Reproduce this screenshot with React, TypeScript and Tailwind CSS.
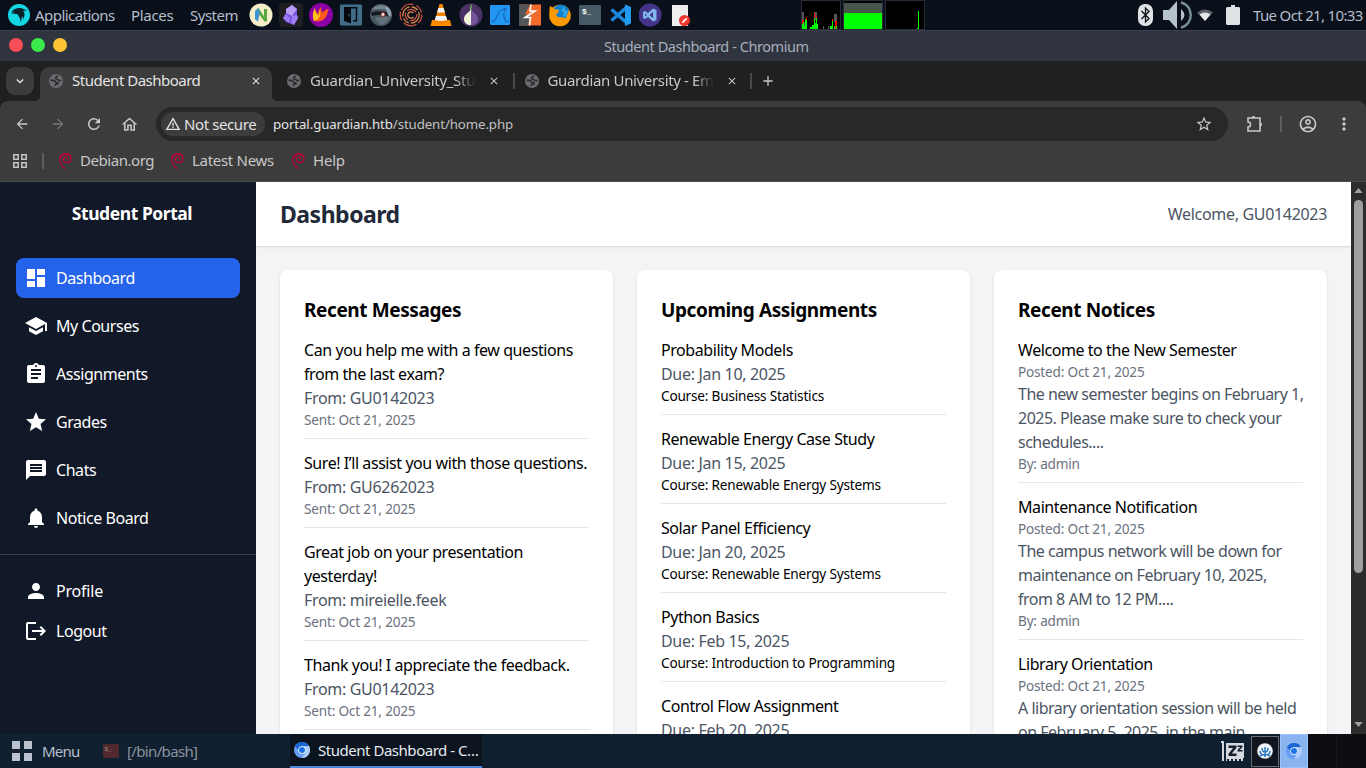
import React from "react";
import {
  MdDashboard, MdSchool, MdAssignment, MdGrade, MdMessage, MdNotifications, MdPerson, MdLogout,
  MdArrowBack, MdArrowForward, MdRefresh, MdOutlineHome, MdStarBorder,
  MdOutlineAccountCircle, MdMoreVert, MdAdd, MdClose, MdWarningAmber,
} from "react-icons/md";

type Entry = { title: string[]; rows: { text: string; cls: string }[] };

const from = "text-[#4b5563] tracking-[-0.32px]";
const small = "text-[13.6px] leading-5 text-[#6b7280]";
const course = "text-[13.6px] leading-5 text-black";
const body = "text-[#4b5563] tracking-[-0.5px]";

const message = (title: string[], sender: string): Entry => ({
  title,
  rows: [{ text: `From: ${sender}`, cls: from }, { text: "Sent: Oct 21, 2025", cls: small }],
});
const assignment = (title: string, due: string, name: string): Entry => ({
  title: [title],
  rows: [{ text: `Due: ${due}`, cls: from }, { text: `Course: ${name}`, cls: course }],
});
const notice = (title: string, lines: string[]): Entry => ({
  title: [title],
  rows: [
    { text: "Posted: Oct 21, 2025", cls: small },
    ...lines.map((text) => ({ text, cls: body })),
    { text: "By: admin", cls: small },
  ],
});

const columns: { heading: string; entries: Entry[] }[] = [
  {
    heading: "Recent Messages",
    entries: [
      message(["Can you help me with a few questions", "from the last exam?"], "GU0142023"),
      message(["Sure! I’ll assist you with those questions."], "GU6262023"),
      message(["Great job on your presentation", "yesterday!"], "mireielle.feek"),
      message(["Thank you! I appreciate the feedback."], "GU0142023"),
    ],
  },
  {
    heading: "Upcoming Assignments",
    entries: [
      assignment("Probability Models", "Jan 10, 2025", "Business Statistics"),
      assignment("Renewable Energy Case Study", "Jan 15, 2025", "Renewable Energy Systems"),
      assignment("Solar Panel Efficiency", "Jan 20, 2025", "Renewable Energy Systems"),
      assignment("Python Basics", "Feb 15, 2025", "Introduction to Programming"),
      assignment("Control Flow Assignment", "Feb 20, 2025", "Introduction to Programming"),
    ],
  },
  {
    heading: "Recent Notices",
    entries: [
      notice("Welcome to the New Semester", ["The new semester begins on February 1,", "2025. Please make sure to check your", "schedules...."]),
      notice("Maintenance Notification", ["The campus network will be down for", "maintenance on February 10, 2025,", "from 8 AM to 12 PM...."]),
      notice("Library Orientation", ["A library orientation session will be held", "on February 5, 2025, in the main"]),
    ],
  },
];

const Svg = ({ children, className = "size-6" }: { children: React.ReactNode; className?: string }) => (
  <svg viewBox="0 0 24 24" className={`${className} shrink-0`}>{children}</svg>
);

function Launchers() {
  return (
    <div className="flex items-center gap-[6px]">
      <Svg>
        <circle cx="12" cy="12" r="11.5" fill="#f4efc8" />
        <path d="M6 8l3-2.500v13L6 16z" fill="#3e93d3" />
        <path d="M8.500 5.500h1.500l5 8V6h3v12.500h-2.500L9 10z" fill="#5aa845" />
        <path d="M6 8l3-2.500 2 3-2 10L6 16z" fill="#3e93d3" />
      </Svg>
      <Svg>
        <rect width="24" height="24" rx="4" fill="#1f1e20" />
        <path d="M13 2l5 4 0 6 1 3-4 7-8-3-3-4 3-5 0-4z" fill="#7c4fe0" />
        <path d="M13 2l5 4-5 7-6-3V6z" fill="#b79cf5" />
        <path d="M7 11l4 4-1 5-6-5zM13 13l5-1 1 3-4 7-3-2z" fill="#9c7af0" />
      </Svg>
      <Svg>
        <circle cx="12" cy="12" r="12" fill="#8c00a5" />
        <path d="M5 18c-2-5-1-9 1-13 0 3 2 5 3 6 0-3 1-5 3-7 0 3 1 4 1 6 2-2 4-4 7-4-2 3-1 6-4 9-2 3-7 4-11 3z" fill="#ff5a1c" />
        <path d="M5 18C3 13 4 9 6 5c0 4 2 6 4 8 0-3 0-5 1-6 1 5 0 9-6 11z" fill="#ffc21a" />
      </Svg>
      <Svg>
        <rect x=".5" y="1" width="23" height="22" rx="2" fill="#426d88" stroke="#0b1720" />
        <path d="M5 4h7v16.500L5 18z" fill="#05090d" />
        <path d="M12 4.800h5.500v13H14" fill="none" stroke="#05090d" strokeWidth="1.500" />
        <path d="M10 10.500v3" stroke="#426d88" />
      </Svg>
      <Svg>
        <circle cx="12" cy="12" r="11" fill="#4a5963" />
        <path d="M2 7C7 0 18 1 22 8c-6-2-12-3-20-1z" fill="#75838e" />
        <path d="M2 9.500c7-2 13-1.500 19 .5l-1 3c-7-1-11-1.500-17 0z" fill="#16191d" />
        <circle cx="14" cy="11.500" r="2.400" fill="#a33e3a" />
        <circle cx="14" cy="11.500" r="1.300" fill="#fff" />
        <path d="M6 15c4-1 9-1 14-1-1 4-4 7-8 8z" fill="#60727e" />
        <path d="M16 3c5 2 7 6 6 11l-3-2z" fill="#91a6b3" />
      </Svg>
      <Svg>
        <g fill="none" strokeWidth="1.300">
          <circle cx="12" cy="12" r="10.800" stroke="#c8503c" strokeDasharray="9 2 14 3" />
          <circle cx="12" cy="12" r="8.200" stroke="#dc8a42" strokeDasharray="13 2 7 2" />
          <circle cx="12" cy="12" r="5.700" stroke="#ca5140" strokeDasharray="10 2 8 2" />
          <path d="M14.500 10a3.200 3.200 0 1 0 0 4" stroke="#e28b4d" />
        </g>
      </Svg>
      <Svg>
        <path d="M3 17h18l1.500 6h-21z" fill="#ff8a00" />
        <path d="M10.500 1h3l5 18q-6.500 3-13 0z" fill="#f58200" />
        <path d="M9.400 5h5.200l1.400 4.500H8zM7 13h10l1.200 4q-6 2-12.400 0z" fill="#f4f4f4" />
      </Svg>
      <Svg>
        <circle cx="12" cy="12" r="11.500" fill="#4b3266" />
        <path d="M12 6c-1 3-7 5-7 10 0 4 3 6 7 6z" fill="#f1f3dc" />
        <path d="M12 6c1 3 7 5 7 10 0 4-3 6-7 6z" fill="#76549a" />
        <path d="M11 7c0-3 0-5 2-6-.5 2-.5 3-.5 6z" fill="#78b852" />
      </Svg>
      <Svg>
        <rect x="1" y="2" width="20" height="20" rx="1" fill="#2196f3" />
        <path d="M2 18.500c5 0 5-3 6.500-6.500 1.600-4 4-6 8.500-6.500-3 4-2.500 9 0 13h3" fill="none" stroke="#1767b3" strokeWidth="1.200" />
      </Svg>
      <Svg>
        <rect x="0" y="1.500" width="22" height="21" fill="#f26b2c" />
        <path d="M0 1.500h11l-5 10h5L9 22.500H0z" fill="#54575a" />
        <path d="M12 1.500L11 8h5L6 14.500h5.500l-1 8" fill="none" stroke="#fff" strokeWidth="1.600" />
      </Svg>
      <Svg>
        <circle cx="11" cy="12.500" r="10.800" fill="#ff9800" />
        <path d="M5 5c4-5 12-4 15 2l-3 8-8-1-4-4z" fill="#0f82cf" />
        <path d="M1 3c2 1 3 2 4 3l5 1-1 3-3 2c1 4 5 4 8 2-1 5-9 6-11 1C0 11 0 7 1 3z" fill="#ff9800" />
        <path d="M15 3l1 4 3 1-2 6-3-1 1-4-3-1z" fill="#37a5e8" />
      </Svg>
      <Svg>
        <rect x="0" y="2" width="22" height="20" rx="1" fill="#455a64" />
        <text x="3" y="11" fill="#fff" fontSize="8" fontFamily="Liberation Mono" fontWeight="700">$_</text>
      </Svg>
      <Svg>
        <path d="M2.500 6.500L18 20M2.500 17.500L18 4" stroke="#1b87dc" strokeWidth="3.600" />
        <path d="M16 1.500L22 4v16.500L16 23z" fill="#229af0" />
      </Svg>
      <Svg>
        <circle cx="11" cy="12" r="11.500" fill="#43348a" />
        <path d="M14 5.500l3.500 1.500v10L14 18.500l-5-4.600L6 16l-2-1V9l2-1 3 2.100zM6 10.500v3L7.700 12zM14 9l-3.500 3 3.500 3z" fill="#7fb6ea" />
      </Svg>
      <Svg>
        <path d="M3 2h16v21H3z" fill="#eee" />
        <circle cx="15.500" cy="17.500" r="5.500" fill="#f1362f" />
        <path d="M13.300 19.700l4.400-4.400" stroke="#fff" strokeWidth="1.800" />
      </Svg>
    </div>
  );
}

function Monitors() {
  return (
    <svg viewBox="0 0 124 30" className="h-[30px] w-[124px]" shapeRendering="crispEdges">
      <g fill="#000" stroke="#292b39">
        <rect x=".5" y=".5" width="39" height="29" />
        <rect x="42.500" y=".5" width="39" height="29" />
        <rect x="84.500" y=".5" width="39" height="29" />
      </g>
      <path d="M1 12h2v10h2v6H1zM13 12h3v8h-3zM33 14h3v8h-3zM22 26h1v3h-1zM27 26h1v3h-1z" fill="#555560" />
      <path d="M1 20h2v8H1zM5 17h1v5H5zM13 13h1v6h-1zM15 16h1v7h-1zM31 19h1v6h-1zM34 21h2v8h-2z" fill="#f00" />
      <path d="M1 24h1v5H1zM2 22h1v7H2zM3 26h1v3H3zM4 19h1v10H4zM5 20h1v9H5zM9 27h2v2H9zM11 25h2v4h-2zM13 18h1v11h-1zM14 23h1v6h-1zM15 18h1v11h-1zM16 24h1v5h-1zM29 26h2v3h-2zM31 21h1v8h-1zM33 26h1v3h-1zM35 26h1v3h-1z" fill="#0f0" />
      <rect x="43" y="3" width="38" height="10" fill="#47544b" />
      <rect x="43" y="13" width="38" height="16" fill="#0f0" />
      <path d="M117 11h1v18h-2v-1h1z" fill="#0f0" />
    </svg>
  );
}

function SystemBar() {
  return (
    <div className="flex h-[30px] shrink-0 items-center bg-[#09101a] text-[15px] text-[#b4bdcb]">
      <svg viewBox="0 0 22 22" className="ml-2 size-[22px] shrink-0">
        <circle cx="11" cy="11" r="11" fill="#13d8e3" />
        <path d="M3 8.500c3-4 6-4.500 10-4.500l6 2.500-4 .5c2.500 2 1.500 5 .5 8l-1.500-3-1 6.500c-1-4-2-7-4-8.500L3 9.500l4-2z" fill="#0a2029" />
      </svg>
      <span className="ml-[5px] w-[96px] whitespace-nowrap pb-px tracking-[-0.55px]">Applications</span>
      <span className="w-[59px] whitespace-nowrap pb-px tracking-[-0.3px]">Places</span>
      <span className="w-[59px] whitespace-nowrap pb-px tracking-[-0.5px]">System</span>
      <Launchers />
      <div className="ml-[108px]"><Monitors /></div>
      <div className="ml-auto flex items-center">
        <svg viewBox="0 0 15 22" className="h-[22px] w-[15px]">
          <rect width="15" height="22" rx="7" fill="#dfe3e5" />
          <path d="M3.500 7l7.500 7.500L7.500 18V4L11 7.500 3.500 15" fill="none" stroke="#0b1119" strokeWidth="1.300" />
        </svg>
        <svg viewBox="0 0 30 28" className="ml-[10px] h-7 w-[30px]">
          <path d="M0 9h6l8-9v28l-8-9H0z" fill="#b4c3ca" />
          <path d="M18 8q7 6 0 12z" fill="#b4c3ca" />
          <path d="M18 1.500c13 3 13 22 0 25" fill="none" stroke="#78909c" strokeWidth="2.400" />
        </svg>
        <svg viewBox="0 0 16 12" className="ml-[4px] h-3 w-4">
          <path d="M0 3.500Q8-2.500 16 3.500L8 12z" fill="#5d626a" />
          <path d="M2.500 5.500Q8 1.500 13.500 5.500L8 12z" fill="#e5e8eb" />
        </svg>
        <svg viewBox="0 0 14 20" className="ml-[13px] h-5 w-[14px]"><path d="M1 2h4V0h4v2h4l1 1v16l-1 1H1l-1-1V3z" fill="#dfe2e5" /></svg>
        <span className="ml-[13px] mr-[4px] w-[109px] whitespace-nowrap pb-px tracking-[-0.66px]">Tue Oct 21, 10:33</span>
      </div>
    </div>
  );
}

const Globe = () => (
  <svg viewBox="0 0 14 14" className="size-[14px] shrink-0">
    <circle cx="7" cy="7" r="7" fill="#696b70" />
    <path d="M1.600 6.400h3.200c1.600 0 1.200 2.300 2.800 2.300h1.200v1.300H7.300c-1 0-1 1-1 2M8.600 1.500c0 2-2 1-2 2.600s3 .6 3 2.400H12.500" fill="none" stroke="#2a2b2b" strokeWidth="1.600" />
  </svg>
);

function Tabs() {
  return (
    <div className="flex h-10 shrink-0 items-center bg-[#1f2020] text-[15px] text-[#c7c7c7]">
      <div className="ml-[6px] flex size-7 items-center justify-center rounded-[9px] bg-[#3c3c3c]">
        <svg viewBox="0 0 10 6" className="h-[6px] w-[8px]"><path d="M1 1l4 4 4-4" fill="none" stroke="#e3e3e3" strokeWidth="1.800" /></svg>
      </div>
      <svg viewBox="0 0 6 40" className="h-10 w-[6px]"><path d="M6 34v6H0q6 0 6-6z" fill="#3c3c3c" /></svg>
      <div className="mt-[6px] flex h-[34px] w-[232px] items-center rounded-t-[10px] bg-[#3c3c3c] pb-[6px] pl-[9px] text-[#e3e3e3]">
        <Globe />
        <span className="ml-[9px] whitespace-nowrap pb-[2px] tracking-[-0.5px]">Student Dashboard</span>
        <MdClose className="ml-auto mr-[10px] size-[12px]" />
      </div>
      <svg viewBox="0 0 6 40" className="h-10 w-[6px]"><path d="M0 34v6h6q-6 0-6-6z" fill="#3c3c3c" /></svg>
      <div className="ml-[9px] flex w-[219px] items-center">
        <Globe />
        <span className="ml-[9px] w-[166px] overflow-hidden whitespace-nowrap pb-[2px] tracking-[-0.3px] [mask-image:linear-gradient(90deg,#000_88%,transparent)]">Guardian_University_Stud</span>
        <MdClose className="ml-[12px] size-[12px]" />
      </div>
      <div className="ml-[7px] h-4 w-[1.500px] bg-[#484848]" />
      <div className="ml-[10px] flex w-[219px] items-center">
        <Globe />
        <span className="ml-[9px] w-[166px] overflow-hidden whitespace-nowrap pb-[2px] tracking-[-0.35px] [mask-image:linear-gradient(90deg,#000_88%,transparent)]">Guardian University - Ema</span>
        <MdClose className="ml-[12px] size-[12px]" />
      </div>
      <div className="ml-[6px] h-4 w-[2px] bg-[#484848]" />
      <MdAdd className="ml-[8px] size-4" />
    </div>
  );
}

function Toolbar() {
  return (
    <div className="bg-[#1f2020]">
      <div className="flex h-[46px] items-center rounded-t-[8px] bg-[#3c3c3c] text-[#c7c7c7]">
        <MdArrowBack className="ml-[14px] size-4" />
        <MdArrowForward className="ml-5 size-4 text-[#777]" />
        <MdRefresh className="ml-[19px] size-[18px]" />
        <MdOutlineHome className="ml-[17px] size-[19px]" />
        <div className="ml-[17px] flex h-[34px] w-[1072px] items-center rounded-full bg-[#282828] text-[14px] text-[#e3e3e3]">
          <div className="ml-[5px] flex h-6 w-[104px] items-center rounded-full bg-[#3c3c3c] pl-[4px] text-[15px]">
            <MdWarningAmber className="size-4" />
            <span className="ml-[3px] whitespace-nowrap pb-px tracking-[-0.4px]">Not secure</span>
          </div>
          <span className="ml-2 whitespace-nowrap text-[13.300px] tracking-[-0.12px]">portal.guardian.htb<span className="text-[#c0c0c0]">/student/home.php</span></span>
          <MdStarBorder className="ml-auto mr-[15px] size-[18px] text-[#c7c7c7]" />
        </div>
        <svg viewBox="0 0 18 18" className="ml-[18px] size-[18px] shrink-0">
          <path d="M2 3h3.500M8.500 3H14v5.500M14 10.500V16H2v-4a2.300 2.300 0 0 0 0-5V3h12v13" fill="none" stroke="#c7c7c7" strokeWidth="1.600" />
          <path d="M5.500 3a2 2 0 0 1 4 0zM14 7.500a2 2 0 0 1 0 4z" fill="#c7c7c7" />
        </svg>
        <div className="ml-4 h-4 w-[2px] bg-[#5e5e5e]" />
        <MdOutlineAccountCircle className="ml-[16px] size-5" />
        <MdMoreVert className="ml-[16px] size-5" />
      </div>
    </div>
  );
}

const Swirl = ({ className }: { className: string }) => (
  <svg viewBox="0 0 13 16" className={`${className} h-4 w-[13px] shrink-0`} fill="none" stroke="#c4003d">
    <path d="M6 15.500C2.500 13 .8 10 .8 7 .8 3 3.500.800 7 .8c3 0 5 2 5 4.500S10.300 9.700 7.800 9.700 4.300 8 4.300 6.600 5.500 4 7 4.200s2 1.200 1.600 2.200" strokeWidth="1.200" />
    <path d="M1.200 5C2 2.200 4.200 1 6.800 1s4.400 1.200 4.900 3" strokeWidth="1.700" />
  </svg>
);

function Bookmarks() {
  return (
    <div className="flex h-[35px] shrink-0 items-center border-b border-[#4a4a4a] bg-[#3c3c3c] pb-[7px] text-[15px] text-[#c7c7c7]">
      <svg viewBox="0 0 14 14" className="ml-[13px] size-[14px]" fill="none" stroke="#c7c7c7" strokeWidth="1.500">
        <path d="M.8.8h4.400v4.400H.8zM8.800.8h4.400v4.400H8.800zM.8 8.800h4.400v4.400H.8zM8.800 8.800h4.400v4.400H8.800z" />
      </svg>
      <div className="ml-[15px] h-4 w-[2px] bg-[#5e5e5e]" />
      <Swirl className="ml-[15px]" />
      <span className="ml-2 w-[73px] whitespace-nowrap pb-[2px] tracking-[-0.45px]">Debian.org</span>
      <Swirl className="ml-[18px]" />
      <span className="ml-2 w-[82px] whitespace-nowrap pb-[2px] tracking-[-0.3px]">Latest News</span>
      <Swirl className="ml-[18px]" />
      <span className="ml-2 whitespace-nowrap pb-[2px]">Help</span>
    </div>
  );
}

const nav = [
  { label: "Dashboard", Icon: MdDashboard, active: true },
  { label: "My Courses", Icon: MdSchool },
  { label: "Assignments", Icon: MdAssignment },
  { label: "Grades", Icon: MdGrade },
  { label: "Chats", Icon: MdMessage },
  { label: "Notice Board", Icon: MdNotifications },
];

function Sidebar() {
  return (
    <aside className="flex w-64 shrink-0 flex-col bg-[#111827] tracking-[-0.45px] text-white">
      <div className="flex h-[61px] items-center justify-center pl-[8px] text-[17.500px] font-bold">Student Portal</div>
      <nav className="flex flex-col gap-2 px-4 pt-[15px]">
        {nav.map(({ label, Icon, active }) => (
          <a key={label} className={`flex h-10 items-center gap-2 rounded-lg px-2 ${active ? "bg-[#2563eb]" : ""}`}>
            <Icon className="size-6" />{label}
          </a>
        ))}
      </nav>
      <div className="mt-4 border-t border-[#374151] px-4 pt-4">
        <a className="flex h-10 items-center gap-2 px-2 tracking-[-0.2px]"><MdPerson className="size-6" />Profile</a>
        <a className="flex h-10 items-center gap-2 px-2"><MdLogout className="size-6" />Logout</a>
      </div>
    </aside>
  );
}

function Card({ heading, entries }: { heading: string; entries: Entry[] }) {
  return (
    <section className="h-[700px] rounded-lg bg-white p-6 shadow-sm">
      <h2 className="mb-[14px] whitespace-nowrap pt-[2px] text-[19px] font-bold leading-7 tracking-[-0.4px]">{heading}</h2>
      <ul className="flex flex-col gap-3">
        {entries.map((e) => (
          <li key={e.title[0]} className="border-b border-[#e5e7eb] pb-2">
            {e.title.map((t) => <p key={t} className="whitespace-nowrap tracking-[-0.43px]">{t}</p>)}
            {e.rows.map((r) => <p key={r.text} className={`whitespace-nowrap ${r.cls}`}>{r.text}</p>)}
          </li>
        ))}
      </ul>
    </section>
  );
}

const Chromium = () => (
  <svg viewBox="0 0 16 16" className="size-4 shrink-0">
    <circle cx="8" cy="8" r="8" fill="#669df6" />
    <path d="M1 4a8 8 0 0 1 14 0H8L5 9z" fill="#1967d2" />
    <path d="M15 4a8 8 0 0 1-7 12l4-7-2-5z" fill="#aecbfa" />
    <circle cx="8" cy="8" r="3.800" fill="#fff" /><circle cx="8" cy="8" r="3" fill="#1a73e8" />
  </svg>
);

function Taskbar() {
  return (
    <div className="flex h-[34px] shrink-0 items-center bg-[#112030] text-[15px] text-[#b5bdcb]">
      <div className="ml-3 grid size-5 grid-cols-2 gap-1">
        <i className="bg-[#bdc2d0]" /><i className="bg-[#bdc2d0]" /><i className="bg-[#bdc2d0]" /><i className="bg-[#bdc2d0]" />
      </div>
      <span className="ml-[10px] w-[61px] pb-px tracking-[-0.8px]">Menu</span>
      <svg viewBox="0 0 16 14" className="h-[14px] w-4">
        <rect width="16" height="14" rx="1.500" fill="#50282d" />
        <text x="1.500" y="7" fontSize="6" fontFamily="Liberation Mono" fill="#a9969b">$_</text>
      </svg>
      <span className="ml-[8px] w-[163px] pb-px tracking-[-0.65px] text-[#8b929f]">[/bin/bash]</span>
      <div className="flex h-full w-[192px] items-center border-b-2 border-[#4b87db] bg-[#0c151f] pl-1 text-[#e6eaf0]">
        <Chromium /><span className="ml-2 whitespace-nowrap tracking-[-0.47px]">Student Dashboard - C…</span>
      </div>
      <svg viewBox="0 0 23 20" className="ml-[739px] h-5 w-[23px] shrink-0">
        <path d="M0 0h3v20H1V2H0zM5 2h18v15h-1v3h-2v-2h-2v2h-2v-2h-2v2h-2v-2h-2v2H8v-2H6v2H5z" fill="#d5d8df" />
        <path d="M7.500 4.500h8v2.200L10.800 12.500h4.700V15h-8v-2.200L12 7H7.500zM16.500 4.500h5v1.500l-2.800 3h2.800v1.500h-5V9l2.800-3h-2.800z" fill="#17212d" />
      </svg>
      <div className="ml-[7px] flex h-[31px] w-7 items-center justify-center border border-[#666b74] bg-[#11151d]">
        <svg viewBox="0 0 16 16" className="size-4"><circle cx="8" cy="8" r="7.800" fill="#f0f4f8" /><path d="M8 14V4M8 12c-4 0-5-2-5-4m5 1c-2 0-3-2-3-4m3 7c4 0 5-2 5-4m-5 1c2 0 3-2 3-4M5 12l-2 1M11 12l2 1" fill="none" stroke="#2e79c6" strokeWidth="1.500" /></svg>
      </div>
      <div className="ml-px flex h-full w-7 items-center justify-center border border-[#9dc2f5] bg-[#8ab4ef]"><Chromium /></div>
      <div className="flex h-full flex-1 bg-[#0d0e13]"><div className="ml-[28px] w-px bg-[#191a20]" /></div>
    </div>
  );
}

export default function App() {
  return (
    <div className="flex h-[768px] w-[1366px] flex-col overflow-hidden bg-[#1f2020] font-['Noto_Sans',sans-serif] text-[16px] leading-6 tracking-[-0.2px]">
      <SystemBar />
      <div className="flex h-[31px] shrink-0 items-center border-t border-[#3a4050] bg-[#2f343f] text-[15px] text-[#a7aebc]">
        <div className="ml-[9px] flex w-[595px] gap-2 pb-[2px]">
          <i className="size-[14px] rounded-full bg-[#f94e55]" /><i className="size-[14px] rounded-full bg-[#39ea49]" /><i className="size-[14px] rounded-full bg-[#fdc435]" />
        </div>
        <span className="whitespace-nowrap text-[14.500px] tracking-[-0.44px]">Student Dashboard - Chromium</span>
      </div>
      <Tabs />
      <Toolbar />
      <Bookmarks />
      <div className="flex h-[552px] shrink-0 overflow-hidden">
        <Sidebar />
        <div className="min-w-0 flex-1 overflow-hidden bg-[#f3f4f6]">
          <header className="flex h-16 items-center justify-between bg-white px-6 shadow-sm">
            <h1 className="text-[23px] font-bold tracking-[-0.5px] text-[#1f2937]">Dashboard</h1>
            <span className="tracking-[-0.32px] text-[#4b5563]">Welcome, GU0142023</span>
          </header>
          <main className="grid grid-cols-3 gap-6 p-6">
            {columns.map((c) => <Card key={c.heading} {...c} />)}
          </main>
        </div>
        <div className="flex w-[15px] shrink-0 flex-col items-center bg-[#2c2c2c]">
          <svg viewBox="0 0 10 6" className="mt-[6px] h-[5px] w-[9px]"><path d="M0 6l5-6 5 6z" fill="#9f9f9f" /></svg>
          <div className="mt-[7px] h-[373px] w-[9px] rounded-full bg-[#9f9f9f]" />
          <svg viewBox="0 0 10 6" className="mb-[7px] mt-auto h-[5px] w-[9px]"><path d="M0 0l5 6 5-6z" fill="#9f9f9f" /></svg>
        </div>
      </div>
      <Taskbar />
    </div>
  );
}
